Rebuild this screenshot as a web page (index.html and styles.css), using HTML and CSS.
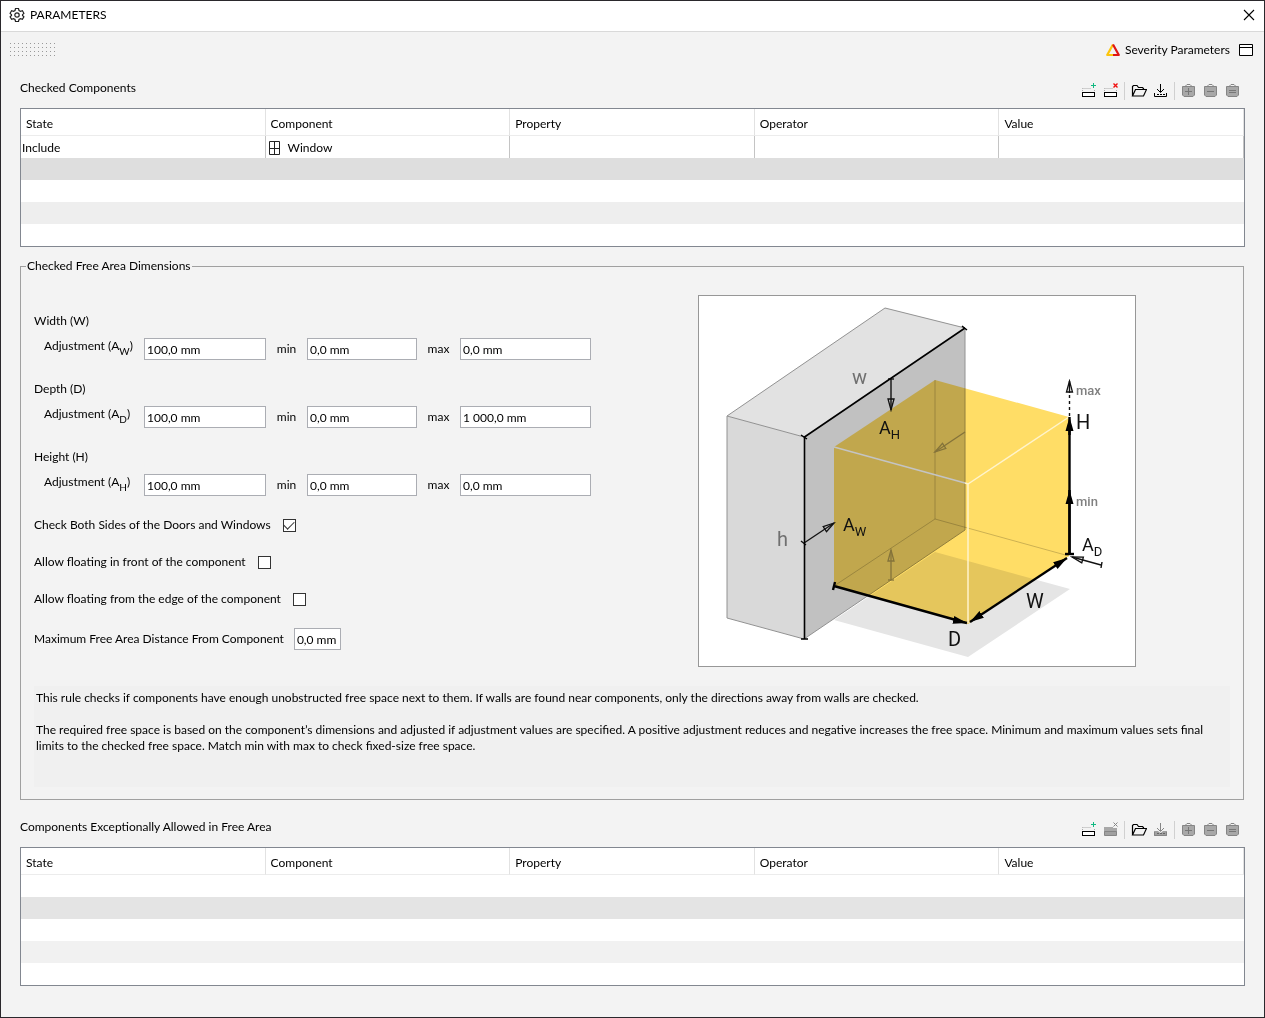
FILE: index.html
```html
<!DOCTYPE html>
<html lang="en">

<head>
    <meta charset="UTF-8">
    <meta name="viewport" content="width=device-width, initial-scale=1.0">
    <title>Parameters</title>
    <link rel="stylesheet" href="styles.css">
</head>

<body>
    <!-- Shared icons -->
    <svg class="sprite" aria-hidden="true">
        <symbol id="icon-add" viewBox="0 0 16 16">
            <path d="M1.5 8V5.5M1.5 5.5H10M13.5 7V9" fill="none" stroke="#aaa" stroke-dasharray="1 1" />
            <rect x="1.5" y="9.5" width="12" height="4" fill="#fff" stroke="#000" />
            <path d="M12.5 0V5M10 2.5H15" stroke="#10b981" fill="none" />
        </symbol>
        <symbol id="icon-remove" viewBox="0 0 16 16">
            <path d="M1.5 8V5.5M1.5 5.5H10M13.5 7V9" fill="none" stroke="#aaa" stroke-dasharray="1 1" />
            <rect x="1.5" y="9.5" width="12" height="4" fill="#fff" stroke="#000" />
            <path d="M10.5 0.5L14.5 4.5M14.5 0.5L10.5 4.5" stroke="#f01010" stroke-width="1.4" fill="none" />
        </symbol>
        <symbol id="icon-remove-off" viewBox="0 0 16 16">
            <path d="M1 5H10V6H14V13H1Z" fill="#a8a8a8" />
            <path d="M1.5 9.5H13.5V13.5H1.5Z" fill="#a0a0a0" stroke="#858585" />
            <path d="M10.5 0.5L14.5 4.5M14.5 0.5L10.5 4.5" stroke="#858585" fill="none" />
        </symbol>
        <symbol id="icon-open" viewBox="0 0 16 16">
            <path d="M1.5 13V3.5L2.5 2.5H6L7.5 4.5H11.5L12.5 5.5V6.5M1.5 13L4.5 6.5H15.5L12.5 13Z" fill="none" stroke="#000" stroke-width="1.2" />
        </symbol>
        <symbol id="icon-save" viewBox="0 0 16 16">
            <path d="M7.5 1V9M4 6L7.5 9.5L11 6M1.5 10V13.5H13.5V10" fill="none" stroke="#000" />
            <path d="M4 11.5H12" fill="none" stroke="#000" stroke-dasharray="2 1" />
        </symbol>
        <symbol id="icon-save-off" viewBox="0 0 16 16">
            <path d="M1 9H5L7.5 11L10 9H14V14H1Z" fill="#a0a0a0" />
            <path d="M7.5 1V9M4 6L7.5 9.5L11 6M1.5 10V13.5H13.5V10" fill="none" stroke="#858585" />
            <path d="M4 11.5H12" stroke="#666" stroke-dasharray="2 1" />
        </symbol>
        <symbol id="icon-bag" viewBox="0 0 16 16">
            <path d="M4.5 4V3L6 1.5H9L10.5 3V4" fill="none" stroke="#858585" />
            <path d="M1.5 3.5H13.5V12L12 13.5H3L1.5 12Z" fill="#a8a8a8" stroke="#858585" />
        </symbol>
    </svg>

    <div class="window">
        <header class="titlebar">
            <svg class="icon" viewBox="0 0 16 16" fill="none" stroke="#222">
                <path d="M6.500 1.500H9.500L10 3.500L11.500 4.300L13.400 3.700L14.900 6.300L13.500 7.700V8.500L14.900 9.900L13.400 12.300L11.500 11.700L10 12.500L9.500 14.500H6.500L6 12.500L4.500 11.700L2.600 12.300L1.100 9.900L2.500 8.500V7.700L1.100 6.300L2.600 3.700L4.500 4.300L6 3.500Z" stroke-width="1.200" />
                <circle cx="8" cy="8" r="2.200" stroke-width="1.200" />
            </svg>
            <h1>PARAMETERS</h1>
            <button class="icon-btn close-btn" type="button" aria-label="Close">
                <svg class="icon" viewBox="0 0 16 16"><path d="M3 3L13 13M13 3L3 13" stroke="#000" stroke-width="1.100" /></svg>
            </button>
        </header>

        <div class="strip">
            <div class="grip"></div>
            <button class="severity-btn" type="button">
                <svg class="icon" viewBox="0 0 16 16" fill="none" stroke-width="2.2" stroke-linejoin="round">
                    <path d="M8 13H2.200L8 2.500" stroke="#fcc50c" />
                    <path d="M8 13H13.800L8 2.500" stroke="#e01515" />
                </svg>
                Severity Parameters
            </button>
            <button class="icon-btn" type="button" aria-label="Maximize">
                <svg class="icon" viewBox="0 0 16 16"><path d="M1.5 2.5H14.5V13.5H1.5ZM1.5 5.5H14.5" fill="#fff" stroke="#000" /></svg>
            </button>
        </div>

        <main>
            <div class="section-head">
                <h2>Checked Components</h2>
                <div class="tools">
                    <button class="icon-btn" type="button" aria-label="Add row"><svg class="icon"><use href="#icon-add" /></svg></button>
                    <button class="icon-btn" type="button" aria-label="Remove row"><svg class="icon"><use href="#icon-remove" /></svg></button>
                    <span class="sep"></span>
                    <button class="icon-btn" type="button" aria-label="Open"><svg class="icon"><use href="#icon-open" /></svg></button>
                    <button class="icon-btn" type="button" aria-label="Save"><svg class="icon"><use href="#icon-save" /></svg></button>
                    <span class="sep"></span>
                    <button class="icon-btn" type="button" aria-label="Add selection" disabled><svg class="icon" viewBox="0 0 16 16"><use href="#icon-bag" /><path d="M4 8.5H11M7.5 5V12" stroke="#777" /></svg></button>
                    <button class="icon-btn" type="button" aria-label="Remove selection" disabled><svg class="icon" viewBox="0 0 16 16"><use href="#icon-bag" /><path d="M4 8.5H11" stroke="#777" /></svg></button>
                    <button class="icon-btn" type="button" aria-label="Set selection" disabled><svg class="icon" viewBox="0 0 16 16"><use href="#icon-bag" /><path d="M4 7.5H11M4 9.5H11" stroke="#777" /></svg></button>
                </div>
            </div>
            <table class="filter-table">
                <thead>
                    <tr><th>State</th><th>Component</th><th>Property</th><th>Operator</th><th>Value</th></tr>
                </thead>
                <tbody>
                    <tr class="filled">
                        <td>Include</td>
                        <td>
                            <span class="component">
                                <svg class="icon" viewBox="0 0 16 16"><path d="M2.5 1.5H12.5V14.5H2.5ZM7.5 1.5V14.5M2.5 8.5H12.5" fill="none" stroke="#222" /></svg>
                                Window
                            </span>
                        </td>
                        <td></td><td></td><td></td>
                    </tr>
                    <tr><td colspan="5"></td></tr>
                    <tr><td colspan="5"></td></tr>
                    <tr><td colspan="5"></td></tr>
                    <tr><td colspan="5"></td></tr>
                </tbody>
            </table>

            <fieldset class="dimensions">
                <legend>Checked Free Area Dimensions</legend>
                <div class="dimensions-body">
                    <div class="form">
                        <div class="group">
                            <div>Width (W)</div>
                            <div class="fields">
                                <label class="adjust" for="w-adj">Adjustment (A<sub>W</sub>)</label>
                                <input id="w-adj" type="text" value="100,0 mm">
                                <label for="w-min">min</label>
                                <input id="w-min" type="text" value="0,0 mm">
                                <label for="w-max">max</label>
                                <input id="w-max" type="text" value="0,0 mm">
                            </div>
                        </div>
                        <div class="group">
                            <div>Depth (D)</div>
                            <div class="fields">
                                <label class="adjust" for="d-adj">Adjustment (A<sub>D</sub>)</label>
                                <input id="d-adj" type="text" value="100,0 mm">
                                <label for="d-min">min</label>
                                <input id="d-min" type="text" value="0,0 mm">
                                <label for="d-max">max</label>
                                <input id="d-max" type="text" value="1 000,0 mm">
                            </div>
                        </div>
                        <div class="group">
                            <div>Height (H)</div>
                            <div class="fields">
                                <label class="adjust" for="h-adj">Adjustment (A<sub>H</sub>)</label>
                                <input id="h-adj" type="text" value="100,0 mm">
                                <label for="h-min">min</label>
                                <input id="h-min" type="text" value="0,0 mm">
                                <label for="h-max">max</label>
                                <input id="h-max" type="text" value="0,0 mm">
                            </div>
                        </div>
                        <label class="check">Check Both Sides of the Doors and Windows <input type="checkbox" checked></label>
                        <label class="check">Allow floating in front of the component <input type="checkbox"></label>
                        <label class="check">Allow floating from the edge of the component <input type="checkbox"></label>
                        <div class="distance">
                            <label for="distance">Maximum Free Area Distance From Component</label>
                            <input id="distance" type="text" value="0,0 mm">
                        </div>
                    </div>

                    <svg class="diagram" viewBox="1 1 436 370" role="img" aria-label="Free area dimensions">
                        <defs>
                            <marker id="solid" markerUnits="userSpaceOnUse" markerWidth="16" markerHeight="10" refX="14" refY="5" orient="auto-start-reverse">
                                <path d="M0 1L14 5L0 9Z" />
                            </marker>
                            <marker id="open" markerUnits="userSpaceOnUse" markerWidth="14" markerHeight="10" refX="12" refY="5" orient="auto">
                                <path d="M1 2L12 5L1 8Z" fill="none" stroke="context-stroke" stroke-width="1.300" />
                            </marker>
                        </defs>

                        <!-- shadow and wall -->
                        <polygon points="136,325 237,257 372,294 270,362" fill="#e5e5e5" />
                        <polygon points="29,121 187,13 267,33 106,142" fill="#e2e2e2" />
                        <polygon points="29,121 106,142 106,344 29,323" fill="#d9d9d9" />
                        <polygon points="106,142 267,33 267,235 106,344" fill="#c1c1c1" />
                        <path d="M106 142L29 121L187 13L267 33V235L106 344L29 323V121" fill="none" stroke="#929292" />

                        <!-- free area -->
                        <polygon class="free-area" points="136,152 237,85 371,122 371,261 270,329 136,291" />
                        <path d="M237 85V224L136 291M237 224L371 261" fill="none" stroke="#000" stroke-opacity=".2" />
                        <path d="M136 152L267 188" stroke="#c4c4c4" stroke-width="1.500" />
                        <path d="M267 188L270 189L371 122M270 189V328" fill="none" stroke="#fff4cc" stroke-width="1.500" />

                        <!-- adjustments -->
                        <g fill="none" stroke="#111" stroke-width="1.400">
                            <path d="M193 84V115" marker-end="url(#open)" />
                            <path d="M190 84H196" />
                            <path d="M106 248L136 228" marker-end="url(#open)" />
                            <path d="M403 270L374 262" marker-end="url(#open)" />
                            <path d="M404 267L403 273M103 246L108 250" />
                            <path d="M371.500 121V98" stroke-dasharray="3 3" />
                            <path d="M371.500 98V86" marker-end="url(#open)" />
                        </g>
                        <g fill="none" stroke="#84733a" stroke-width="1.300">
                            <path d="M267 137L237 157" marker-end="url(#open)" />
                            <path d="M190 285H196" />
                            <path d="M193 285V255" marker-end="url(#open)" />
                        </g>

                        <!-- dimension lines -->
                        <g fill="none" stroke="#000">
                            <path d="M106.500 344V142L267 33" stroke-width="1.600" />
                            <path d="M103 344H110M103 140L109 144M264 31L269 35" stroke-width="1.500" />
                            <g stroke-width="2.400">
                                <path d="M137 287L135 295M136 291L258 325" />
                                <path d="M256 325L269 328" marker-end="url(#solid)" />
                                <path d="M272 327L369 263" marker-start="url(#solid)" marker-end="url(#solid)" />
                                <path d="M367 259H376" />
                                <path d="M371.500 259V134" />
                                <path d="M371.500 259V195" marker-end="url(#solid)" />
                                <path d="M371.500 140V122" marker-end="url(#solid)" />
                            </g>
                        </g>

                        <text class="lbl muted" x="154" y="89">w</text>
                        <text class="lbl muted" x="79" y="251">h</text>
                        <text class="lbl" x="378" y="134">H</text>
                        <text class="lbl" x="328" y="313">W</text>
                        <text class="lbl" x="250" y="351">D</text>
                        <text class="adj" x="181" y="139">A<tspan class="sub" dy="5">H</tspan></text>
                        <text class="adj" x="145" y="236">A<tspan class="sub" dy="5">W</tspan></text>
                        <text class="adj" x="384" y="256">A<tspan class="sub" dy="5">D</tspan></text>
                        <text class="small" x="378" y="100">max</text>
                        <text class="small" x="378" y="211">min</text>
                    </svg>
                </div>

                <div class="description">
                    <p>This rule checks if components have enough unobstructed free space next to them. If walls are found near components, only the directions away from walls are checked.</p>
                    <p>The required free space is based on the component’s dimensions and adjusted if adjustment values are specified. A positive adjustment reduces and negative increases the free space. Minimum and maximum values sets final limits to the checked free space. Match min with max to check fixed-size free space.</p>
                </div>
            </fieldset>

            <div class="section-head exceptions">
                <h2>Components Exceptionally Allowed in Free Area</h2>
                <div class="tools">
                    <button class="icon-btn" type="button" aria-label="Add row"><svg class="icon"><use href="#icon-add" /></svg></button>
                    <button class="icon-btn" type="button" aria-label="Remove row" disabled><svg class="icon"><use href="#icon-remove-off" /></svg></button>
                    <span class="sep"></span>
                    <button class="icon-btn" type="button" aria-label="Open"><svg class="icon"><use href="#icon-open" /></svg></button>
                    <button class="icon-btn" type="button" aria-label="Save" disabled><svg class="icon"><use href="#icon-save-off" /></svg></button>
                    <span class="sep"></span>
                    <button class="icon-btn" type="button" aria-label="Add selection" disabled><svg class="icon" viewBox="0 0 16 16"><use href="#icon-bag" /><path d="M4 8.5H11M7.5 5V12" stroke="#777" /></svg></button>
                    <button class="icon-btn" type="button" aria-label="Remove selection" disabled><svg class="icon" viewBox="0 0 16 16"><use href="#icon-bag" /><path d="M4 8.5H11" stroke="#777" /></svg></button>
                    <button class="icon-btn" type="button" aria-label="Set selection" disabled><svg class="icon" viewBox="0 0 16 16"><use href="#icon-bag" /><path d="M4 7.5H11M4 9.5H11" stroke="#777" /></svg></button>
                </div>
            </div>
            <table class="filter-table light">
                <thead>
                    <tr><th>State</th><th>Component</th><th>Property</th><th>Operator</th><th>Value</th></tr>
                </thead>
                <tbody>
                    <tr><td colspan="5"></td></tr>
                    <tr><td colspan="5"></td></tr>
                    <tr><td colspan="5"></td></tr>
                    <tr><td colspan="5"></td></tr>
                    <tr><td colspan="5"></td></tr>
                </tbody>
            </table>
        </main>
    </div>
</body>

</html>
```
FILE: styles.css
```css
* {
    box-sizing: border-box;
}

body {
    margin: 0;
    background-color: #f3f3f3;
    color: #000;
    font-family: Lato, "Open Sans", sans-serif;
    font-size: 12px;
    line-height: 16px;
}

h1,
h2 {
    margin: 0;
    font-size: 12px;
    font-weight: normal;
}

button,
input {
    font: inherit;
    color: inherit;
}

.sprite {
    display: none;
}

.icon {
    display: block;
    flex: none;
    width: 16px;
    height: 16px;
}

.window {
    min-height: 100vh;
    border: 1px solid #2a282c;
}

.titlebar {
    display: flex;
    align-items: center;
    gap: 5px;
    height: 31px;
    padding: 0 4px 2px 8px;
    background-color: #fff;
    border-bottom: 1px solid #d9d9d9;
}

.icon-btn {
    display: flex;
    align-items: center;
    justify-content: center;
    width: 22px;
    height: 22px;
    padding: 0;
    border: none;
    background: none;
}

.close-btn {
    margin-left: auto;
}

.strip {
    display: flex;
    align-items: center;
    height: 36px;
    padding: 0 7px 0 8px;
}

/* Dotted drag handle */
.grip {
    width: 48px;
    height: 16px;
    margin-right: auto;
    background-image: linear-gradient(90deg, #f3f3f3 3px, transparent 3px), linear-gradient(#f3f3f3 3px, #999 3px);
    background-position: -2px -2px;
    background-size: 4px 4px;
}

.severity-btn {
    display: flex;
    align-items: center;
    gap: 4px;
    padding: 0 5px;
    border: none;
    background: none;
}

main {
    padding: 0 19px 30px;
}

.section-head {
    display: flex;
    align-items: center;
    justify-content: space-between;
    height: 40px;
}

.exceptions {
    margin-top: 7px;
}

.tools {
    display: flex;
    align-items: center;
    padding: 6px 1px 0 0;
}

.sep {
    width: 1px;
    height: 18px;
    margin: 0 3px 0 2px;
    background-color: #d0d0d0;
}

.filter-table {
    width: 100%;
    table-layout: fixed;
    border-collapse: separate;
    border-spacing: 0;
    border: 1px solid #828790;
    background-color: #fff;
}

.filter-table th {
    height: 27px;
    padding: 3px 5px 0;
    border-right: 1px solid #e2e2e2;
    border-bottom: 1px solid #ececec;
    font-weight: normal;
    text-align: left;
}

.filter-table td {
    height: 22px;
    padding: 1px 1px 0;
}

.filter-table .filled td {
    border-right: 1px solid #c4c4c4;
}

.filter-table tbody tr:nth-child(2) {
    background-color: #dedede;
}

.filter-table tbody tr:nth-child(4) {
    background-color: #eee;
}

.light tbody tr:nth-child(2) {
    background-color: #e4e4e4;
}

.light tbody tr:nth-child(4) {
    background-color: #f1f1f1;
}

.component {
    display: flex;
    align-items: center;
    gap: 5px;
}

.dimensions {
    min-width: 0;
    margin: 11px 1px 0 0;
    padding: 21px 13px 12px;
    border: 1px solid #a0a0a0;
}

.dimensions legend {
    margin-left: -8px;
    padding: 0 1px;
}

.dimensions-body {
    display: flex;
    gap: 12px;
}

.form {
    display: flex;
    flex-direction: column;
    align-items: flex-start;
    gap: 21px;
    padding-top: 18px;
}

.fields {
    display: grid;
    grid-template-columns: 100px 122px 41px 110px 43px 131px;
    align-items: center;
    margin-top: 9px;
    padding-left: 10px;
}

.fields label {
    text-align: center;
}

.fields .adjust {
    height: 22px;
    text-align: left;
}

.adjust sub {
    font-size: 10px;
    line-height: 0;
    vertical-align: -5px;
}

input[type="text"] {
    width: 100%;
    height: 22px;
    padding: 0 2px;
    border: 1px solid #abadb3;
    background-color: #fff;
}

.check {
    display: flex;
    align-items: center;
    gap: 12px;
}

.check input {
    display: grid;
    place-items: center;
    appearance: none;
    width: 13px;
    height: 13px;
    margin: 0;
    border: 1px solid #333;
    background-color: #fff;
}

.check input:checked::before {
    content: "";
    width: 9px;
    height: 5px;
    margin-bottom: 3px;
    border-left: 1px solid #333;
    border-bottom: 1px solid #333;
    transform: rotate(-45deg);
}

.distance {
    display: flex;
    align-items: center;
    gap: 10px;
}

.distance input[type="text"] {
    width: 47px;
}

.diagram {
    width: 438px;
    height: 372px;
    margin: 0 auto;
    border: 1px solid #979797;
    background-color: #fff;
}

.free-area {
    fill: #fd6;
    mix-blend-mode: multiply;
}

.diagram text {
    font-family: Roboto, sans-serif;
    fill: #111;
}

.diagram .lbl {
    font-size: 20px;
}

.diagram .adj {
    font-size: 18px;
}

.diagram .sub {
    font-size: 13px;
}

.diagram .small {
    font-size: 13px;
    font-weight: 500;
    fill: #808080;
}

.diagram .muted {
    fill: #707070;
}

.description {
    min-height: 101px;
    margin-top: 19px;
    padding: 4px 2px;
    background-color: #f0f0f0;
}

.description p {
    margin: 0 0 16px;
}
```
